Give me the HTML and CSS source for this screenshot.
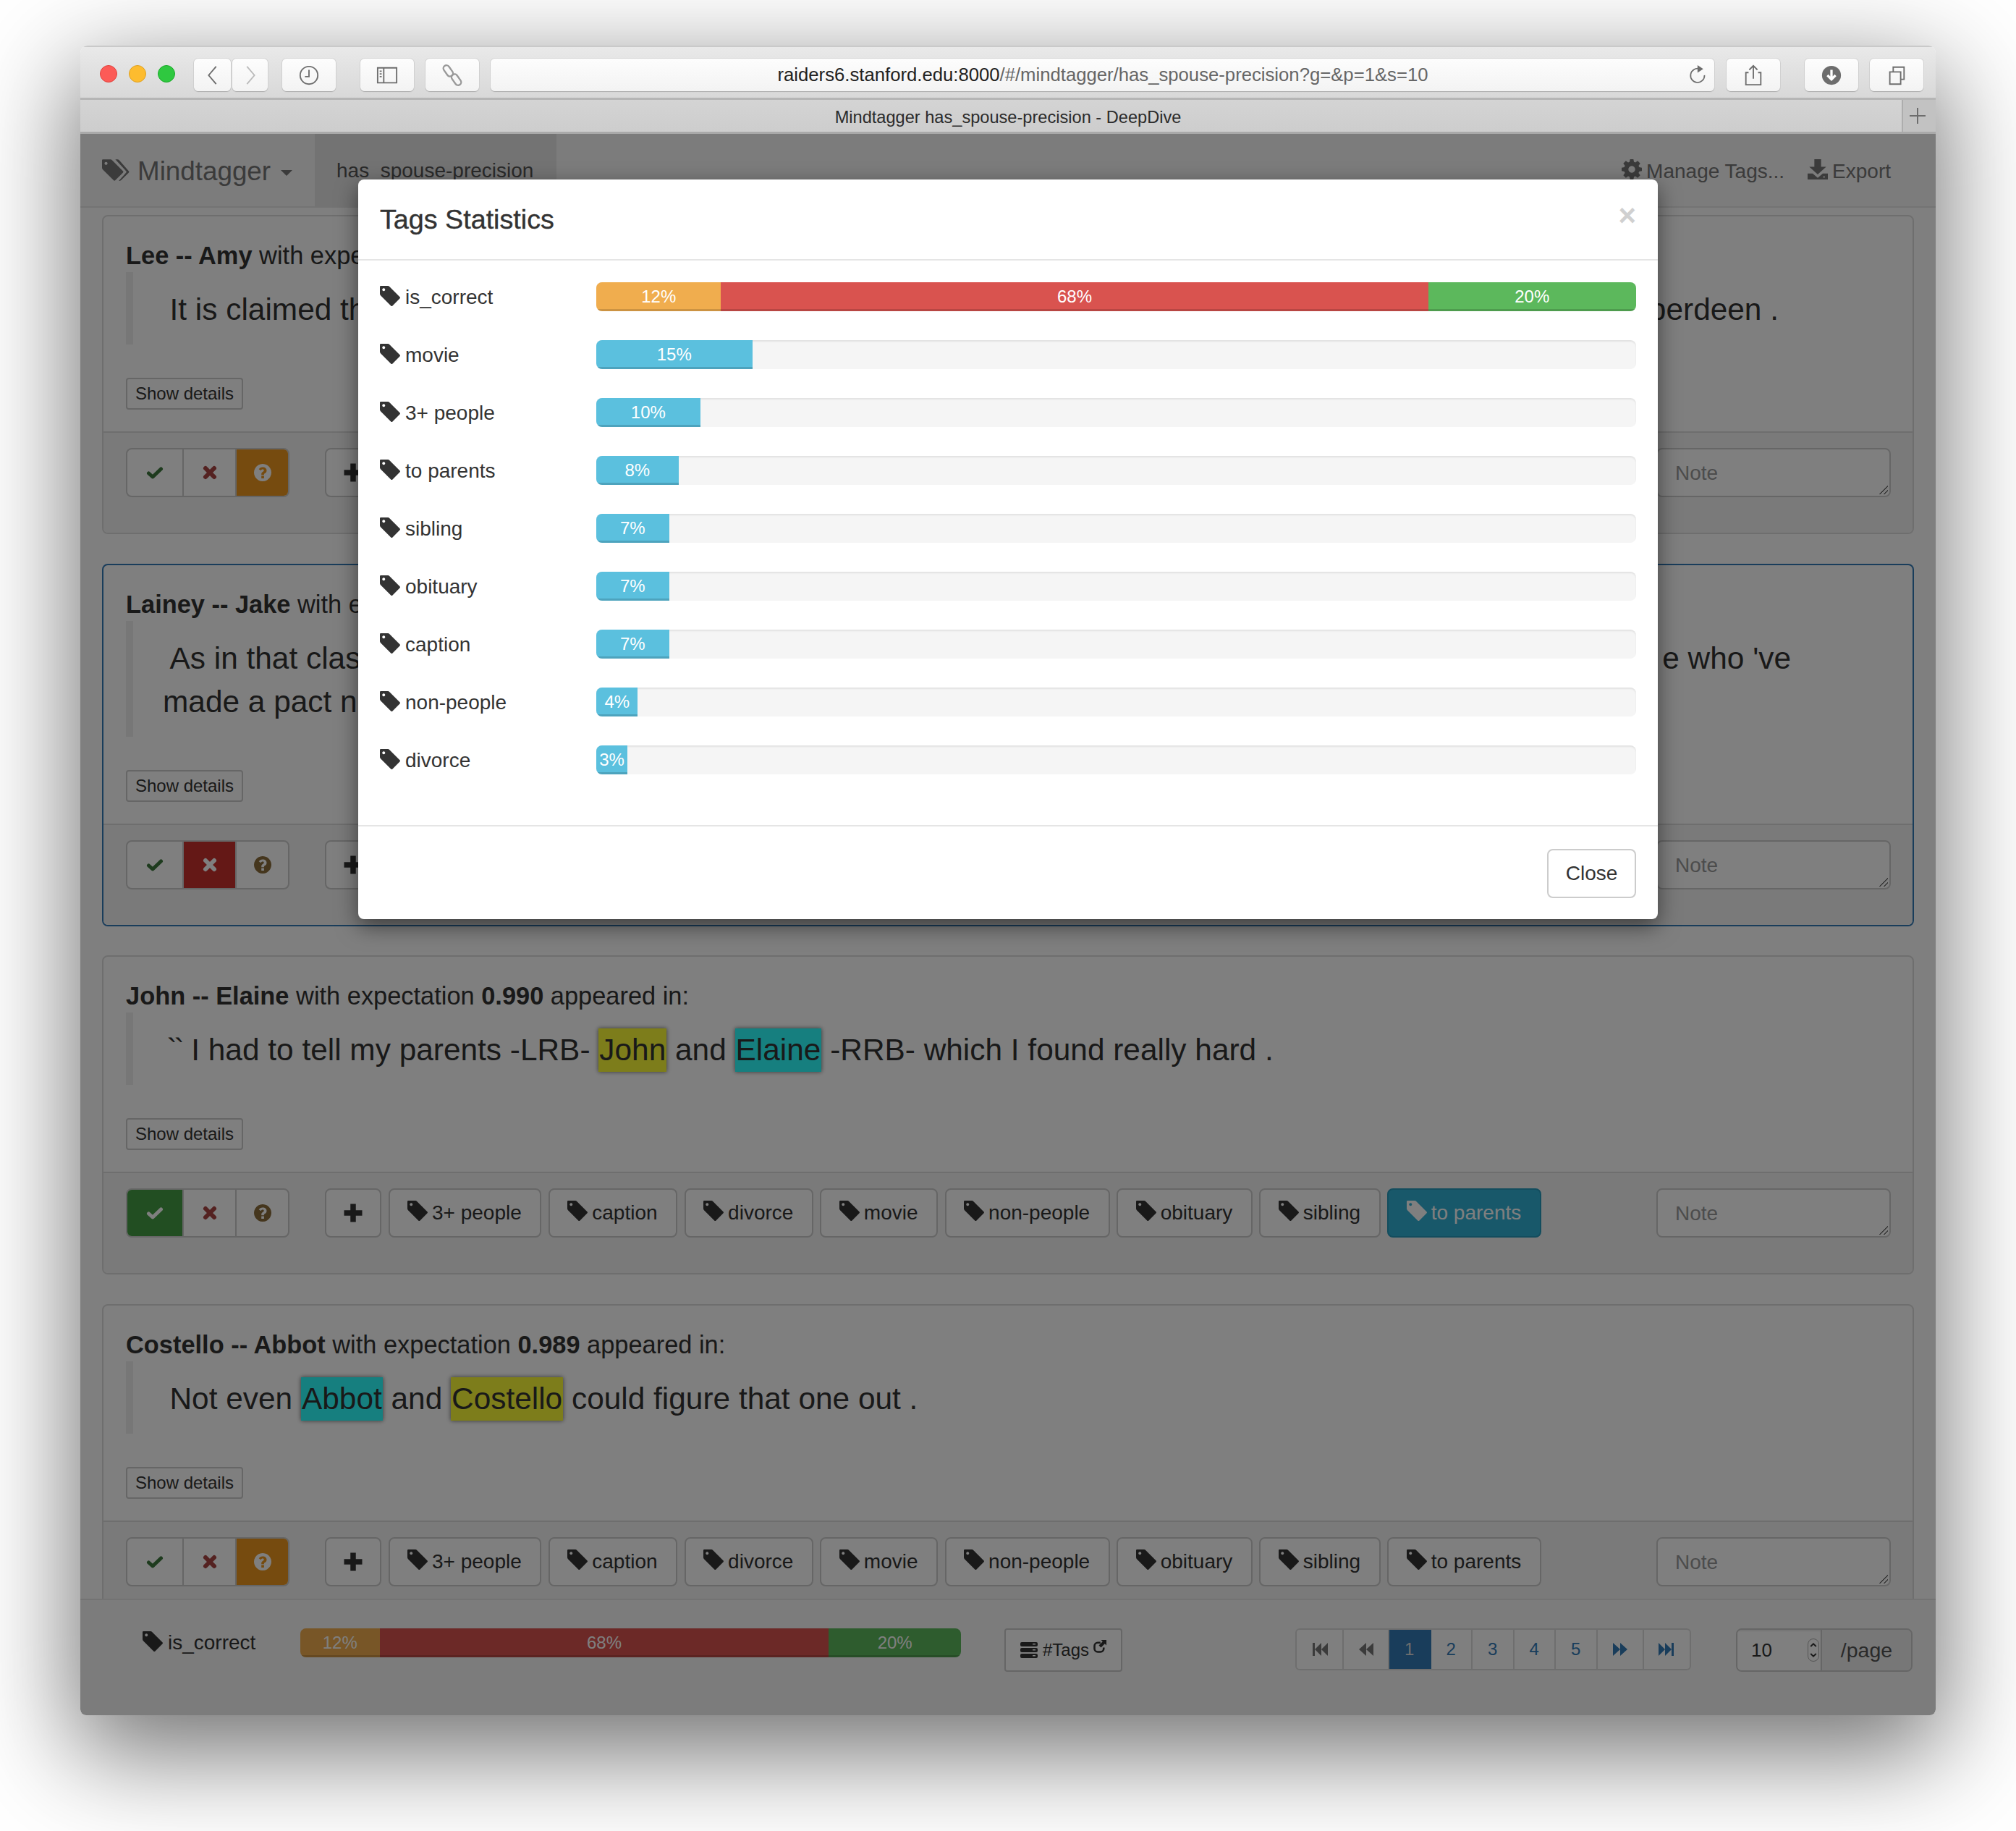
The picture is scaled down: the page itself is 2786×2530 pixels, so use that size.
FILE: index.html
```html
<!DOCTYPE html>
<html lang="en">
<head>
    <meta charset="UTF-8">
    <title>Mindtagger has_spouse-precision - DeepDive</title>
    <link rel="stylesheet" href="styles.css">
</head>
<body>
    <svg class="sprites" width="0" height="0">
        <symbol id="tag" viewBox="0 0 24 24"><path fill-rule="evenodd" d="M1 0h8.500q1 0 2 1L23.500 13q1 1 0 2L15 23.500q-1 1-2 0L1 11.500q-1-1-1-2V1q0-1 1-1zM4.500 2.800a1.700 1.700 0 1 0 .01 0z"/></symbol>
        <symbol id="tags" viewBox="0 0 31 24"><path fill-rule="evenodd" d="M1 0h8.500q1 0 2 1L23.500 13q1 1 0 2L15 23.500q-1 1-2 0L1 11.500q-1-1-1-2V1q0-1 1-1zM4.500 2.800a1.700 1.700 0 1 0 .01 0z"/><path d="M15 0h2.500q1 0 2 1L30 13q1 1 0 2L21.500 23.500q-1 1-2.500.5L27 15q1-1 0-2z"/></symbol>
        <symbol id="check" viewBox="0 0 24 24"><path fill="none" stroke="currentColor" stroke-width="5" stroke-linecap="round" stroke-linejoin="round" d="M3.500 13L9 18 20.500 7"/></symbol>
        <symbol id="cross" viewBox="0 0 24 24"><path fill="none" stroke="currentColor" stroke-width="6" stroke-linecap="round" d="M6 6l12 12M18 6L6 18"/></symbol>
        <symbol id="question" viewBox="0 0 24 24"><path fill-rule="evenodd" d="M12 0a12 12 0 1 0 .01 0zM12 4.500c3.300 0 5.500 2 5.500 4.700 0 2.100-1.200 3-2.400 3.800-.8.500-1.200.9-1.200 1.700v.6h-3.700v-1c0-1.700.8-2.700 2-3.500.9-.6 1.500-1 1.500-1.900 0-.8-.7-1.300-1.700-1.300-1.100 0-2 .6-2.600 1.600L6.700 7.300C7.800 5.600 9.500 4.500 12 4.500zM10.200 16.500h3.700V20h-3.700z"/></symbol>
        <symbol id="plus" viewBox="0 0 24 24"><path d="M9 2h6v7h7v6h-7v7H9v-7H2V9h7z"/></symbol>
        <symbol id="gear" viewBox="0 0 24 24"><path fill-rule="evenodd" d="M10 0h4l.6 3.200 1.700.7L19 2l3 3-1.900 2.700.7 1.700L24 10v4l-3.200.6-.7 1.700L22 19l-3 3-2.700-1.900-1.700.7L14 24h-4l-.6-3.200-1.700-.7L5 22l-3-3 1.900-2.700-.7-1.700L0 14v-4l3.200-.6.7-1.700L2 5l3-3 2.700 1.900 1.700-.7zM12 8a4 4 0 1 0 .01 0z"/></symbol>
        <symbol id="download" viewBox="0 0 24 24"><path fill-rule="evenodd" d="M8 0h8v9h6L12 18 2 9h6zM0 17h6l6 5 6-5h6v7H0zM19.500 20a1 1 0 1 0 .01 0z"/></symbol>
        <symbol id="first" viewBox="0 0 24 24"><path d="M2 3h3v18H2zM5 12l9-9v18zM14 12l9-9v18z"/></symbol>
        <symbol id="prev" viewBox="0 0 24 24"><path d="M2 12l10-9v18zM12 12l10-9v18z"/></symbol>
        <symbol id="next" viewBox="0 0 24 24"><path d="M2 3l10 9-10 9zM12 3l10 9-10 9z"/></symbol>
        <symbol id="last" viewBox="0 0 24 24"><path d="M1 3l9 9-9 9zM10 3l9 9-9 9zM19 3h3v18h-3z"/></symbol>
        <symbol id="list" viewBox="0 0 24 22"><path fill-rule="evenodd" d="M2 0h20q2 0 2 2v2q0 2-2 2H2Q0 6 0 4V2q0-2 2-2zM2 8h20q2 0 2 2v2q0 2-2 2H2q-2 0-2-2v-2q0-2 2-2zM2 16h20q2 0 2 2v2q0 2-2 2H2q-2 0-2-2v-2q0-2 2-2zM17 2v1.500h4V2zM17 10v1.500h4V10zM17 18v1.500h4V18z"/></symbol>
        <symbol id="external" viewBox="0 0 24 24"><path fill="none" stroke="currentColor" stroke-width="3.500" d="M13 5H8a6 6 0 0 0-6 6v5a6 6 0 0 0 6 6h5a6 6 0 0 0 6-6v-2"/><path d="M14 0h10v10l-3-3-7 7-4-4 7-7z"/></symbol>
    </svg>

    <div class="window">
        <div class="toolbar">
            <div class="lights">
                <span class="light red"></span>
                <span class="light yellow"></span>
                <span class="light green"></span>
            </div>
            <div class="tool back"><svg viewBox="0 0 20 32"><path d="M15 3L4 16l11 13"/></svg></div>
            <div class="tool forward"><svg viewBox="0 0 20 32"><path d="M5 3l11 13L5 29"/></svg></div>
            <div class="tool history"><svg viewBox="0 0 32 32"><circle cx="16" cy="16" r="13"/><path d="M16 8v10h-6"/></svg></div>
            <div class="tool sidebar"><svg viewBox="0 0 32 32"><path d="M2 5h28v22H2zM11 5v22M5 10h3M5 14h3M5 18h3"/></svg></div>
            <div class="tool link-tool"><svg viewBox="0 0 32 32"><rect class="light-stroke" x="1" y="5" width="18" height="9" rx="4.500" transform="rotate(55 10 9.500)"/><rect class="light-stroke" x="13" y="18" width="18" height="9" rx="4.500" transform="rotate(55 22 22.500)"/></svg></div>
            <div class="address">
                <span class="url"><b>raiders6.stanford.edu:8000</b>/#/mindtagger/has_spouse-precision?g=&amp;p=1&amp;s=10</span>
                <svg class="reload" viewBox="0 0 32 32"><path d="M20 7a11 11 0 1 0 8 10"/><path class="solid" d="M17 1l9 6-9 6z"/></svg>
            </div>
            <div class="tool share"><svg viewBox="0 0 32 32"><path d="M9 12H5v18h22V12h-4M16 21V3M10 8l6-6 6 6"/></svg></div>
            <div class="tool download-tool"><svg viewBox="0 0 32 32"><circle class="solid" cx="16" cy="16" r="14"/><path class="white" d="M16 8v14M10 16l6 6 6-6"/></svg></div>
            <div class="tool tabs"><svg viewBox="0 0 32 32"><path d="M6 11h16v18H6zM11 11V4h16v18h-5"/></svg></div>
        </div>
        <div class="tabbar">
            <div class="tab-title">Mindtagger has_spouse-precision - DeepDive</div>
            <div class="new-tab"><svg viewBox="0 0 24 24"><path d="M12 1v22M1 12h22"/></svg></div>
        </div>

        <div class="page">
            <nav class="navbar">
                <div class="brand"><svg class="icon brand-icon"><use href="#tags"/></svg>Mindtagger<span class="caret"></span></div>
                <div class="nav-active">has_spouse-precision</div>
                <div class="nav-right">
                    <span class="nav-link"><svg class="icon"><use href="#gear"/></svg>Manage Tags...</span>
                    <span class="nav-link"><svg class="icon"><use href="#download"/></svg>Export</span>
                </div>
            </nav>

            <main class="items">
                <section class="card card-one">
                    <div class="card-body">
                        <p class="headline"><b>Lee -- Amy</b> with expectation appeared in:</p>
                        <blockquote class="sentence">
                            <div class="split split-one"><span>It is claimed that</span><span>Aberdeen .</span></div>
                        </blockquote>
                        <button class="details">Show details</button>
                    </div>
                    <div class="card-foot">
                        <div class="verdict">
                            <span class="v-btn"><svg class="icon v-check"><use href="#check"/></svg></span>
                            <span class="v-btn"><svg class="icon v-cross"><use href="#cross"/></svg></span>
                            <span class="v-btn on-maybe"><svg class="icon"><use href="#question"/></svg></span>
                        </div>
                        <div class="tags">
                            <button class="tag-add"><svg class="icon"><use href="#plus"/></svg></button>
                        </div>
                        <div class="note"><span>Note</span></div>
                    </div>
                </section>

                <section class="card card-two selected">
                    <div class="card-body">
                        <p class="headline"><b>Lainey -- Jake</b> with expectation appeared in:</p>
                        <blockquote class="sentence">
                            <div class="split split-two"><span>As in that class</span><span>e who 've</span></div>
                            <div class="second-line">made a pact not</div>
                        </blockquote>
                        <button class="details">Show details</button>
                    </div>
                    <div class="card-foot">
                        <div class="verdict">
                            <span class="v-btn"><svg class="icon v-check"><use href="#check"/></svg></span>
                            <span class="v-btn on-no"><svg class="icon"><use href="#cross"/></svg></span>
                            <span class="v-btn"><svg class="icon v-maybe"><use href="#question"/></svg></span>
                        </div>
                        <div class="tags">
                            <button class="tag-add"><svg class="icon"><use href="#plus"/></svg></button>
                        </div>
                        <div class="note"><span>Note</span></div>
                    </div>
                </section>

                <section class="card">
                    <div class="card-body">
                        <p class="headline"><b>John -- Elaine</b> with expectation <b>0.990</b> appeared in:</p>
                        <blockquote class="sentence"><span class="quotes">``</span> I had to tell my parents -LRB- <mark class="p1">John</mark> and <mark class="p2">Elaine</mark> -RRB- which I found really hard .</blockquote>
                        <button class="details">Show details</button>
                    </div>
                    <div class="card-foot">
                        <div class="verdict">
                            <span class="v-btn on-yes"><svg class="icon"><use href="#check"/></svg></span>
                            <span class="v-btn"><svg class="icon v-cross"><use href="#cross"/></svg></span>
                            <span class="v-btn"><svg class="icon v-maybe"><use href="#question"/></svg></span>
                        </div>
                        <div class="tags">
                            <button class="tag-add"><svg class="icon"><use href="#plus"/></svg></button>
                            <button class="tag"><svg class="icon"><use href="#tag"/></svg>3+ people</button>
                            <button class="tag"><svg class="icon"><use href="#tag"/></svg>caption</button>
                            <button class="tag"><svg class="icon"><use href="#tag"/></svg>divorce</button>
                            <button class="tag"><svg class="icon"><use href="#tag"/></svg>movie</button>
                            <button class="tag"><svg class="icon"><use href="#tag"/></svg>non-people</button>
                            <button class="tag"><svg class="icon"><use href="#tag"/></svg>obituary</button>
                            <button class="tag"><svg class="icon"><use href="#tag"/></svg>sibling</button>
                            <button class="tag tag-on"><svg class="icon"><use href="#tag"/></svg>to parents</button>
                        </div>
                        <div class="note"><span>Note</span></div>
                    </div>
                </section>

                <section class="card">
                    <div class="card-body">
                        <p class="headline"><b>Costello -- Abbot</b> with expectation <b>0.989</b> appeared in:</p>
                        <blockquote class="sentence">Not even <mark class="p2">Abbot</mark> and <mark class="p1">Costello</mark> could figure that one out .</blockquote>
                        <button class="details">Show details</button>
                    </div>
                    <div class="card-foot">
                        <div class="verdict">
                            <span class="v-btn"><svg class="icon v-check"><use href="#check"/></svg></span>
                            <span class="v-btn"><svg class="icon v-cross"><use href="#cross"/></svg></span>
                            <span class="v-btn on-maybe"><svg class="icon"><use href="#question"/></svg></span>
                        </div>
                        <div class="tags">
                            <button class="tag-add"><svg class="icon"><use href="#plus"/></svg></button>
                            <button class="tag"><svg class="icon"><use href="#tag"/></svg>3+ people</button>
                            <button class="tag"><svg class="icon"><use href="#tag"/></svg>caption</button>
                            <button class="tag"><svg class="icon"><use href="#tag"/></svg>divorce</button>
                            <button class="tag"><svg class="icon"><use href="#tag"/></svg>movie</button>
                            <button class="tag"><svg class="icon"><use href="#tag"/></svg>non-people</button>
                            <button class="tag"><svg class="icon"><use href="#tag"/></svg>obituary</button>
                            <button class="tag"><svg class="icon"><use href="#tag"/></svg>sibling</button>
                            <button class="tag"><svg class="icon"><use href="#tag"/></svg>to parents</button>
                        </div>
                        <div class="note"><span>Note</span></div>
                    </div>
                </section>
            </main>

            <footer class="pager-bar">
                <div class="foot-label"><svg class="icon"><use href="#tag"/></svg>is_correct</div>
                <div class="bar foot-bar">
                    <div class="seg warning" style="width: 12%">12%</div>
                    <div class="seg danger" style="width: 68%">68%</div>
                    <div class="seg success" style="width: 20%">20%</div>
                </div>
                <button class="tags-btn"><svg class="icon"><use href="#list"/></svg>#Tags<svg class="icon ext"><use href="#external"/></svg></button>
                <div class="pagination">
                    <span class="page-item muted w-first"><svg class="icon"><use href="#first"/></svg></span>
                    <span class="page-item muted w-prev"><svg class="icon"><use href="#prev"/></svg></span>
                    <span class="page-item current">1</span>
                    <span class="page-item">2</span>
                    <span class="page-item">3</span>
                    <span class="page-item">4</span>
                    <span class="page-item">5</span>
                    <span class="page-item w-next"><svg class="icon"><use href="#next"/></svg></span>
                    <span class="page-item w-last"><svg class="icon"><use href="#last"/></svg></span>
                </div>
                <div class="per-page">
                    <div class="per-value">10<span class="spinner"><svg viewBox="0 0 10 24"><path d="M2 8l3-3 3 3M2 16l3 3 3-3"/></svg></span></div>
                    <div class="per-addon">/page</div>
                </div>
            </footer>

            <div class="backdrop"></div>

            <div class="modal">
                <div class="modal-head">
                    <h4>Tags Statistics</h4>
                    <span class="modal-x">×</span>
                </div>
                <div class="modal-body">
                    <div class="stat"><div class="stat-label"><svg class="icon"><use href="#tag"/></svg>is_correct</div>
                        <div class="bar">
                            <div class="seg warning" style="width: 12%">12%</div>
                            <div class="seg danger" style="width: 68%">68%</div>
                            <div class="seg success" style="width: 20%">20%</div>
                        </div></div>
                    <div class="stat"><div class="stat-label"><svg class="icon"><use href="#tag"/></svg>movie</div>
                        <div class="bar"><div class="seg info" style="width: 15%">15%</div></div></div>
                    <div class="stat"><div class="stat-label"><svg class="icon"><use href="#tag"/></svg>3+ people</div>
                        <div class="bar"><div class="seg info" style="width: 10%">10%</div></div></div>
                    <div class="stat"><div class="stat-label"><svg class="icon"><use href="#tag"/></svg>to parents</div>
                        <div class="bar"><div class="seg info" style="width: 7.9%">8%</div></div></div>
                    <div class="stat"><div class="stat-label"><svg class="icon"><use href="#tag"/></svg>sibling</div>
                        <div class="bar"><div class="seg info" style="width: 7%">7%</div></div></div>
                    <div class="stat"><div class="stat-label"><svg class="icon"><use href="#tag"/></svg>obituary</div>
                        <div class="bar"><div class="seg info" style="width: 7%">7%</div></div></div>
                    <div class="stat"><div class="stat-label"><svg class="icon"><use href="#tag"/></svg>caption</div>
                        <div class="bar"><div class="seg info" style="width: 7%">7%</div></div></div>
                    <div class="stat"><div class="stat-label"><svg class="icon"><use href="#tag"/></svg>non-people</div>
                        <div class="bar"><div class="seg info" style="width: 4%">4%</div></div></div>
                    <div class="stat"><div class="stat-label"><svg class="icon"><use href="#tag"/></svg>divorce</div>
                        <div class="bar"><div class="seg info" style="width: 3%">3%</div></div></div>
                </div>
                <div class="modal-foot">
                    <button class="close-btn">Close</button>
                </div>
            </div>
        </div>
    </div>
</body>
</html>
```

FILE: styles.css
```css
* {
    box-sizing: border-box;
}
html, body {
    margin: 0;
    height: 2530px;
    background: #fff;
    overflow: hidden;
}
body {
    font-family: "Liberation Sans", Arial, sans-serif;
    color: #333;
    padding: 63px 111px 0 111px;
    width: 2786px;
}
button {
    font-family: inherit;
}
.sprites {
    position: absolute;
}
.icon {
    fill: currentColor;
    flex: none;
}

/* browser chrome */
.window {
    width: 2564px;
    height: 2307px;
    border-radius: 10px 10px 8px 8px;
    box-shadow: 0 44px 140px 8px rgba(0,0,0,0.56);
    display: flex;
    flex-direction: column;
    overflow: hidden;
}
.toolbar {
    height: 75px;
    padding: 16px 16px 0 157px;
    display: flex;
    background: linear-gradient(#e9e9e9, #d8d8d8);
    border-top: 2px solid #c9c9c9;
    border-bottom: 3px solid #b5b5b5;
    position: relative;
}
.lights {
    width: 0;
    display: flex;
    gap: 16px;
    margin-left: -130px;
    margin-right: 130px;
    padding-top: 9px;
}
.light {
    flex: none;
    width: 24px;
    height: 24px;
    border-radius: 50%;
}
.red { background: #fc5b57; border: 1px solid #e0443e; }
.yellow { background: #fdbc2f; border: 1px solid #dea123; }
.green { background: #2fc840; border: 1px solid #1aab29; }
.tool {
    height: 45px;
    width: 74px;
    flex: none;
    background: linear-gradient(#fdfdfd, #f3f3f3);
    border-radius: 6px;
    box-shadow: 0 1px 1px #aaa, 0 0 0 1px #d4d4d4;
    display: flex;
    align-items: center;
    justify-content: center;
}
.tool svg, .reload, .new-tab svg {
    fill: none;
    stroke: #6d6d6d;
    stroke-width: 2;
}
.tool svg {
    width: 30px;
    height: 30px;
}
.tool .solid, .reload .solid {
    fill: #6d6d6d;
    stroke: none;
}
.tool .white {
    stroke: #fff;
    stroke-width: 3.5;
}
.tool .light-stroke {
    stroke: #999;
    stroke-width: 2.5;
}
.back { width: 51px; }
.forward { width: 49px; margin-left: 2px; }
.forward svg { stroke: #bbb; }
.history { margin-left: 20px; }
.sidebar { margin-left: 34px; }
.link-tool { margin-left: 16px; }
.address {
    flex: none;
    width: 1691px;
    height: 45px;
    margin-left: 16px;
    background: linear-gradient(#fdfdfd, #f3f3f3);
    border-radius: 6px;
    box-shadow: 0 1px 1px #aaa, 0 0 0 1px #d4d4d4;
    position: relative;
    text-align: center;
    font-size: 25.7px;
    line-height: 45px;
    color: #666;
    padding-left: 1px;
}
.url b {
    font-weight: normal;
    color: #222;
}
.reload {
    position: absolute;
    right: 10px;
    top: 7px;
    width: 28px;
    height: 30px;
}
.share { margin-left: 17px; }
.download-tool { margin-left: 34px; }
.tabs { margin-left: 16px; }
.tabbar {
    height: 47px;
    flex: none;
    background: linear-gradient(#d4d4d4, #cdcdcd);
    border-bottom: 3px solid #a9a9a9;
    position: relative;
    text-align: center;
    font-size: 23.6px;
    line-height: 49px;
    color: #2b2b2b;
}
.new-tab {
    position: absolute;
    right: 0;
    top: 0;
    width: 47px;
    height: 44px;
    background: #c2c2c2;
    border-left: 2px solid #adadad;
    display: flex;
    align-items: center;
    justify-content: center;
    padding-right: 5px;
}
.new-tab svg {
    width: 24px;
    height: 24px;
}

/* app */
.page {
    position: relative;
    flex: 1;
    background: #fff;
    overflow: hidden;
}
.navbar {
    height: 102px;
    display: flex;
    align-items: stretch;
    background: #f8f8f8;
    border-bottom: 2px solid #e7e7e7;
    color: #777;
}
.brand {
    width: 324px;
    flex: none;
    padding: 3px 0 0 30px;
    display: flex;
    align-items: center;
    font-size: 36.8px;
}
.brand-icon {
    width: 38px;
    height: 30px;
    margin: -4px 11px 0 0;
}
.caret {
    margin-left: 14px;
    border-top: 8px solid #777;
    border-left: 8px solid transparent;
    border-right: 8px solid transparent;
    margin-top: 4px;
}
.nav-active {
    width: 334px;
    flex: none;
    background: #e7e7e7;
    color: #555;
    font-size: 28px;
    padding: 35px 0 0 30px;
}
.nav-right {
    margin-left: auto;
    display: flex;
    gap: 32px;
    padding: 35px 62px 0 0;
    font-size: 28px;
}
.nav-link .icon {
    width: 28px;
    height: 28px;
    margin-right: 6px;
    vertical-align: -2px;
}
.items {
    padding: 10px 30px 0 30px;
    display: flex;
    flex-direction: column;
    gap: 40.5px;
    height: 1922px;
    overflow: hidden;
}
.card {
    flex: none;
    height: 441px;
    border: 2px solid #ddd;
    border-radius: 8px;
    background: #fff;
    display: flex;
    flex-direction: column;
}
.card-two {
    height: 501px;
}
.selected {
    border-color: #337ab7;
}
.card-body {
    flex: 1;
    padding: 34px 31px 0;
}
.headline {
    margin: 0;
    font-size: 34.4px;
    line-height: 40px;
    color: #333;
}
.sentence {
    margin: 3px 0 0;
    padding: 22px 0 18px 41px;
    border-left: 10px solid #eee;
    font-size: 42.4px;
    line-height: 60px;
    min-height: 100px;
    text-indent: 9.5px;
    color: #333;
}
.quotes {
    letter-spacing: -4px;
    margin: 0 1.7px 0 -4px;
}
.split {
    display: flex;
    justify-content: space-between;
    text-indent: 0;
    padding-left: 9.5px;
}
.split-one { padding-right: 154px; }
.split-two { padding-right: 137px; }
.second-line { text-indent: 0; }
mark {
    display: inline-block;
    text-indent: 0;
    color: #333;
    padding: 0 1px;
    box-shadow: 0 0 6px rgba(0,0,0,0.6);
}
.p1 { background: #fafa37; }
.p2 { background: #2dffff; }
.details {
    display: block;
    margin-top: 46px;
    height: 44px;
    width: 162px;
    padding: 0;
    background: #fff;
    border: 2px solid #ccc;
    border-radius: 4px;
    font-size: 24px;
    color: #333;
}
.card-foot {
    height: 140px;
    flex: none;
    background: #f5f5f5;
    border-top: 2px solid #ddd;
    padding: 21px 30px 0 31px;
    display: flex;
    align-items: flex-start;
    border-radius: 0 0 6px 6px;
}
.verdict {
    display: flex;
    height: 68px;
    flex: none;
    width: 226px;
    border: 2px solid #ccc;
    border-radius: 8px;
    background: #fff;
    overflow: hidden;
}
.v-btn {
    flex: 1;
    display: flex;
    align-items: center;
    justify-content: center;
    border-right: 2px solid #ccc;
}
.v-btn:first-child { flex: none; width: 78px; }
.v-btn:last-child { border-right: 0; }
.v-btn .icon {
    width: 24px;
    height: 24px;
}
.v-check { color: #3c763d; }
.v-cross { color: #a94442; }
.v-maybe { color: #8a6d3b; }
.on-yes { background: #449d44; color: #fff; }
.on-no { background: #c9302c; color: #fff; }
.on-maybe { background: #ec971f; color: #fff; }
.tags {
    display: flex;
    gap: 9.5px;
    margin-left: 49px;
    flex: 1;
}
.tags button {
    height: 68px;
    background: #fff;
    border: 2px solid #ccc;
    border-radius: 8px;
    font-size: 28px;
    color: #333;
    display: flex;
    align-items: center;
}
.tag-add {
    width: 78px;
    justify-content: center;
    padding: 0;
}
.tag-add .icon {
    width: 30px;
    height: 30px;
}
.tag {
    padding: 0 25.5px 0 24.5px;
}
.tag .icon {
    width: 28px;
    height: 28px;
    margin: -6px 6px 0 0;
}
.tags .tag-on {
    background: #31b0d5;
    border-color: #269abc;
    color: #fff;
}
.note {
    width: 324px;
    height: 68px;
    flex: none;
    border: 2px solid #ccc;
    border-radius: 8px;
    background: #fff;
    font-size: 28px;
    color: #999;
    padding: 17px 24px;
    position: relative;
}
.note::after {
    content: "";
    position: absolute;
    right: 2px;
    bottom: 2px;
    width: 14px;
    height: 14px;
    background: linear-gradient(135deg, transparent 55%, #777 55%, #777 62%, transparent 62%, transparent 76%, #777 76%, #777 84%, transparent 84%);
}

/* footer */
.pager-bar {
    height: 161px;
    background: #f8f8f8;
    border-top: 2px solid #e7e7e7;
    display: flex;
    align-items: flex-start;
    padding-top: 39px;
}
.foot-label {
    margin-left: 86px;
    width: 218px;
    font-size: 28px;
    color: #333;
    display: flex;
    align-items: center;
    height: 40px;
}
.foot-label .icon, .stat-label .icon {
    width: 28px;
    height: 28px;
    margin: -4px 7px 0 0;
}
.bar {
    height: 40px;
    flex: 1;
    display: flex;
    background: #f5f5f5;
    border-radius: 8px;
    overflow: hidden;
    box-shadow: inset 0 2px 2px rgba(0,0,0,0.08);
}
.foot-bar {
    flex: none;
    width: 913px;
}
.seg {
    height: 100%;
    color: #fff;
    font-size: 24px;
    line-height: 40px;
    text-align: center;
    box-shadow: inset 0 -3px 0 rgba(0,0,0,0.15);
}
.warning { background: #f0ad4e; }
.danger { background: #d9534f; }
.success { background: #5cb85c; }
.info { background: #5bc0de; }
.tags-btn {
    margin-left: 60px;
    width: 163px;
    height: 60px;
    background: #fff;
    border: 2px solid #ccc;
    border-radius: 4px;
    font-size: 24px;
    color: #333;
    display: flex;
    align-items: center;
    padding: 0 0 0 20px;
}
.tags-btn .icon {
    width: 24px;
    height: 22px;
    margin-right: 7px;
}
.tags-btn .ext {
    width: 18px;
    height: 18px;
    margin: -10px 0 0 6px;
}
.pagination {
    margin-left: 239px;
    width: 547px;
    height: 58px;
    display: flex;
    border: 2px solid #ddd;
    border-radius: 6px;
    background: #fff;
    overflow: hidden;
}
.page-item {
    width: 57.5px;
    flex: none;
    display: flex;
    align-items: center;
    justify-content: center;
    font-size: 24px;
    color: #337ab7;
    border-right: 2px solid #ddd;
}
.page-item:last-child { border-right: 0; }
.page-item .icon { width: 24px; height: 24px; }
.w-first { width: 65px; }
.w-prev { width: 63px; }
.w-next { width: 64px; }
.w-last { width: 63px; }
.muted { color: #777; }
.current {
    background: #337ab7;
    color: #ddd;
    border-color: #337ab7;
}
.per-page {
    margin-left: 62px;
    width: 244px;
    height: 60px;
    display: flex;
    border: 2px solid #ccc;
    border-radius: 8px;
    font-size: 28.5px;
    overflow: hidden;
}
.per-value {
    width: 117px;
    background: #fff;
    padding: 13px 0 0 19px;
    font-size: 26px;
    position: relative;
    border-right: 2px solid #ccc;
    box-shadow: inset 0 2px 2px rgba(0,0,0,0.08);
}
.spinner {
    position: absolute;
    right: 2px;
    top: 12px;
    width: 16px;
    height: 32px;
    border: 1px solid #aaa;
    border-radius: 8px;
    display: flex;
}
.spinner svg {
    width: 14px;
    height: 30px;
    fill: none;
    stroke: #333;
    stroke-width: 1.500;
}
.per-addon {
    flex: 1;
    background: #eee;
    text-align: center;
    line-height: 56px;
    color: #555;
}

/* overlay */
.backdrop {
    position: absolute;
    inset: 0;
    background: rgba(0,0,0,0.5);
}
.modal {
    position: absolute;
    left: 384px;
    top: 63px;
    width: 1796px;
    height: 1022px;
    background: #fff;
    border-radius: 8px;
    box-shadow: 0 10px 30px rgba(0,0,0,0.5);
    display: flex;
    flex-direction: column;
}
.modal-head {
    height: 112px;
    flex: none;
    border-bottom: 2px solid #e5e5e5;
    padding: 0 30px;
    display: flex;
    justify-content: space-between;
}
.modal-head h4 {
    margin: 0;
    font-size: 37.7px;
    font-weight: normal;
    line-height: 40px;
    padding-top: 35px;
    color: #333;
    -webkit-text-stroke: 0.4px #333;
}
.modal-x {
    font-size: 42px;
    font-weight: bold;
    color: #d0d0d0;
    padding-top: 26px;
    line-height: 48px;
}
.modal-body {
    flex: 1;
    padding: 30px 30px 0 30px;
    display: flex;
    flex-direction: column;
    gap: 40px;
}
.stat {
    display: flex;
    height: 40px;
    flex: none;
}
.stat-label {
    width: 299px;
    flex: none;
    font-size: 28px;
    display: flex;
    align-items: center;
    color: #333;
    padding-top: 2px;
}
.modal-foot {
    height: 130px;
    flex: none;
    border-top: 2px solid #e5e5e5;
    display: flex;
    justify-content: flex-end;
    padding: 31px 30px 0 0;
}
.close-btn {
    width: 123px;
    height: 68px;
    background: #fff;
    border: 2px solid #ccc;
    border-radius: 8px;
    font-size: 28px;
    color: #333;
}
```
